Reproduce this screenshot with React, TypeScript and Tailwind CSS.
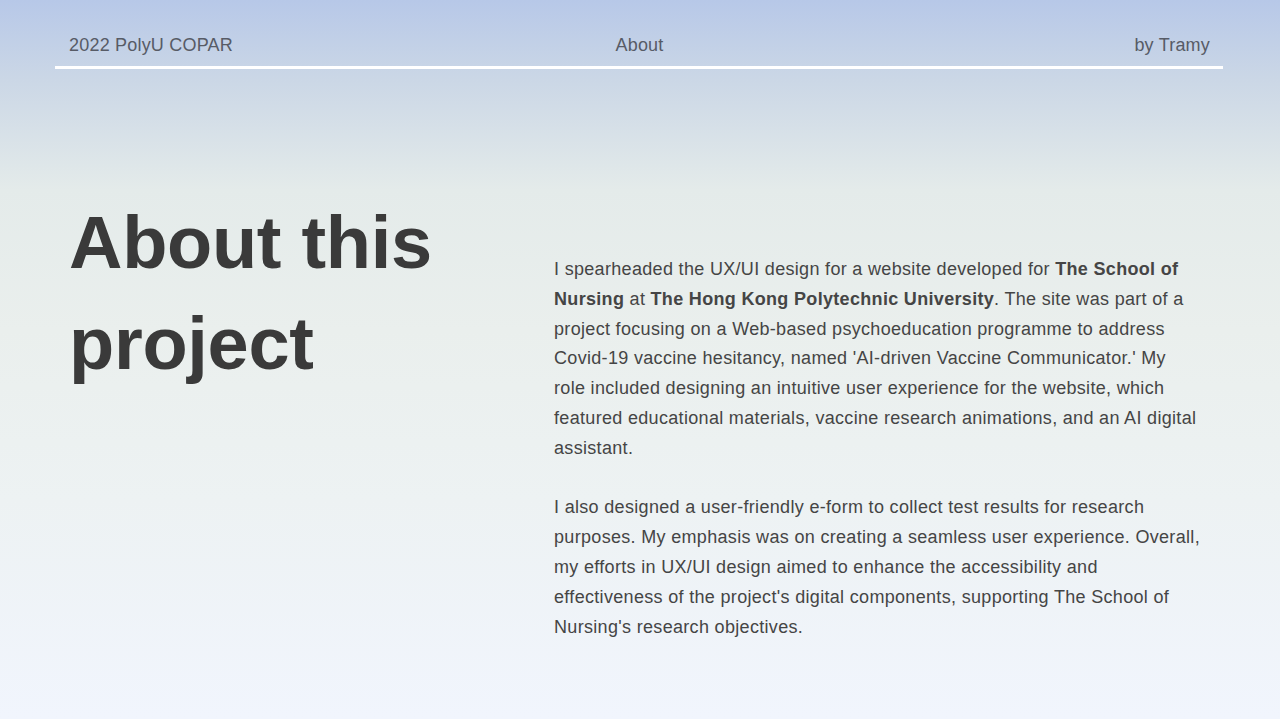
export default function App() {
  return (
    <div
      className="w-full h-[719px] overflow-hidden bg-[linear-gradient(180deg,#b7c8e8_0px,#cbd7e6_80px,#e4ebea_190px,#eaefed_330px,#edf2f3_500px,#f1f5fd_719px)] text-[#3c3c3c]"
      style={{ fontFamily: '"Liberation Sans", Arial, Helvetica, sans-serif' }}
    >
      <header className="ml-[55px] mr-[57px] pt-[33px]">
        <div className="grid grid-cols-3 items-center pl-[14px] pr-[13px] text-[18px] leading-[24px] text-[#575b66] tracking-[0.2px]">
          <span>2022 PolyU COPAR</span>
          <span className="text-center">About</span>
          <span className="text-right">by Tramy</span>
        </div>
        <div className="mt-[9px] h-[3px] bg-white" />
      </header>
      <main className="flex pl-[69px] pt-[123px]">
        <h1 className="w-[485px] shrink-0 text-[74px] leading-[101px] font-bold text-[#3a3a3a] tracking-[-0.3px]">
          About this
          <br />
          project
        </h1>
        <div className="w-[670px] pt-[63px] text-[18px] leading-[29.8px] text-[#454545] tracking-[0.32px] whitespace-nowrap">
          <p>
            I spearheaded the UX/UI design for a website developed for <b>The School of</b>
            <br />
            <b>Nursing</b> at <b>The Hong Kong Polytechnic University</b>. The site was part of a
            <br />
            project focusing on a Web-based psychoeducation programme to address
            <br />
            Covid-19 vaccine hesitancy, named 'AI-driven Vaccine Communicator.' My
            <br />
            role included designing an intuitive user experience for the website, which
            <br />
            featured educational materials, vaccine research animations, and an AI digital
            <br />
            assistant.
          </p>
          <p className="mt-[29.8px]">
            I also designed a user-friendly e-form to collect test results for research
            <br />
            purposes. My emphasis was on creating a seamless user experience. Overall,
            <br />
            my efforts in UX/UI design aimed to enhance the accessibility and
            <br />
            effectiveness of the project's digital components, supporting The School of
            <br />
            Nursing's research objectives.
          </p>
        </div>
      </main>
    </div>
  );
}
